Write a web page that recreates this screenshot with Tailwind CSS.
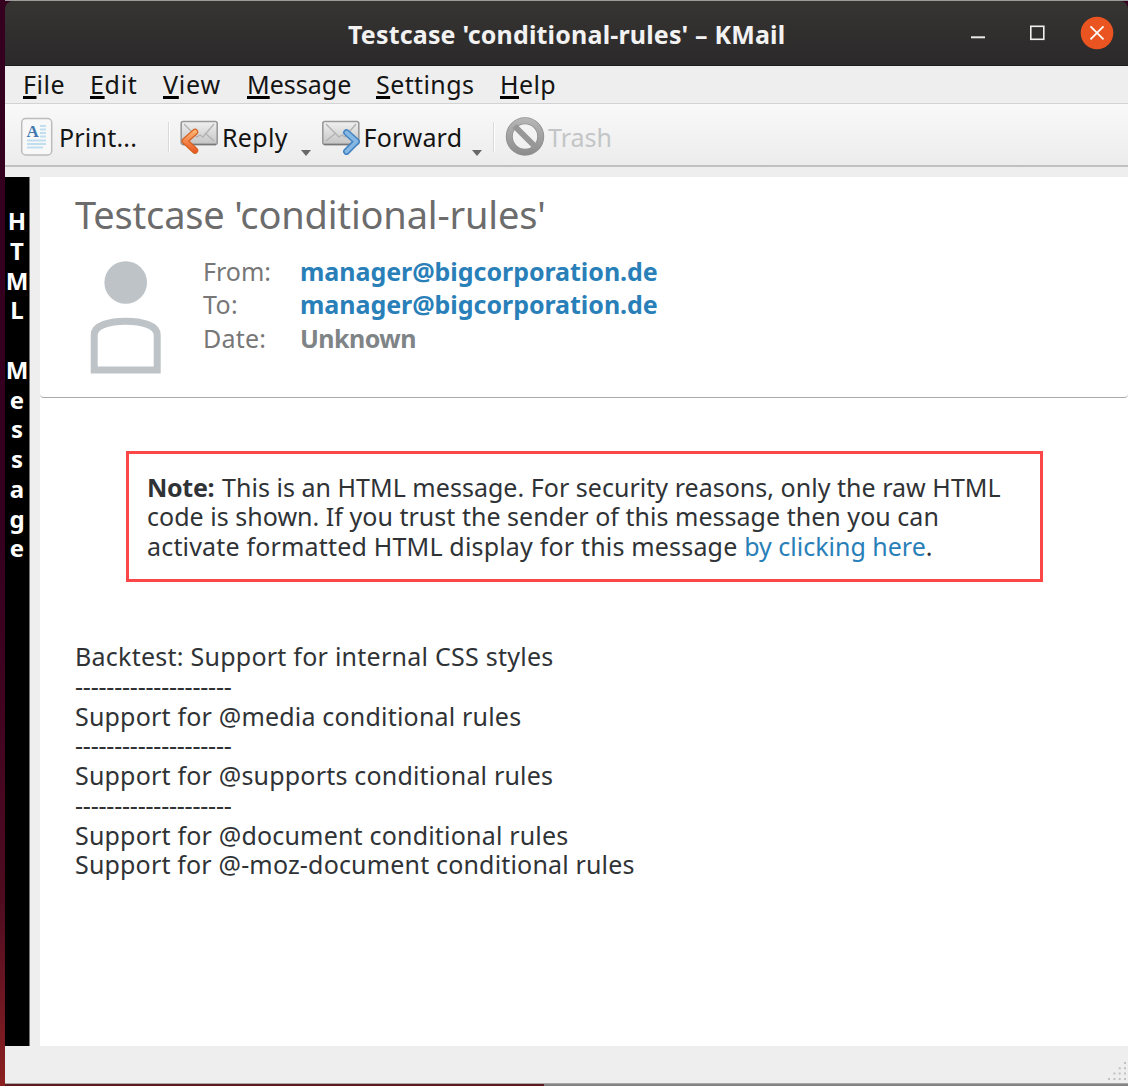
<!DOCTYPE html>
<html lang="en">
<head>
<meta charset="utf-8">
<title>Testcase 'conditional-rules' – KMail</title>
<script src="https://cdn.jsdelivr.net/npm/@tailwindcss/browser@4"></script>
</head>
<body class="w-[1128px] h-[1086px] overflow-hidden font-['Noto_Sans',sans-serif] text-[25px] whitespace-nowrap">
<div class="w-full h-full flex flex-col pl-[5px] bg-linear-to-b from-[#35001f] from-50% via-[#4f0c20] via-83% to-[#8b2020]">
  <div class="h-px shrink-0 bg-[#9a9d9b]"></div>
  <header class="h-[65px] shrink-0 flex items-center rounded-tl-lg rounded-tr-lg bg-linear-to-b from-[#363532] to-[#2b292a] border-b border-[#1c1c1c]">
    <h1 class="ml-[343px] pt-[1px] font-bold text-[#f2f2f2] leading-[30px] tracking-[0.17px]">Testcase 'conditional-rules' – KMail</h1>
    <svg class="ml-auto mr-[14px]" width="144" height="36" viewBox="0 0 144 36" fill="none">
      <path d="M1 22.300h14" stroke="#e8e8e8" stroke-width="2"/>
      <rect x="60.800" y="11.300" width="13" height="13" stroke="#f0f0f0" stroke-width="1.600"/>
      <circle cx="127" cy="18" r="16.300" fill="#e95420"/>
      <path d="M120.500 11.300l13 13M133.500 11.300l-13 13" stroke="#fff" stroke-width="1.800"/>
    </svg>
  </header>
  <nav class="h-[38px] shrink-0 flex items-start pt-[2px] pl-[18px] bg-[#eee] border-b border-[#d3d3d3] text-[#141414] leading-[32px] [&_u]:decoration-[3px] [&_u]:underline-offset-[2px] [&_u]:decoration-black">
    <div class="w-[67px] tracking-[0.5px]"><u>F</u>ile</div>
    <div class="w-[73px] tracking-[0.7px]"><u>E</u>dit</div>
    <div class="w-[84px] tracking-[0.8px]"><u>V</u>iew</div>
    <div class="w-[129px]"><u>M</u>essage</div>
    <div class="w-[124px] tracking-[0.4px]"><u>S</u>ettings</div>
    <div class="tracking-[0.4px]"><u>H</u>elp</div>
  </nav>
  <div class="h-[63px] shrink-0 flex items-center pt-[4px] pl-[15px] bg-linear-to-b from-[#f9f9f9] to-[#ececec] border-b-2 border-[#c0c0c0] text-[#141414] leading-[32px]">
    <svg class="w-[33px] shrink-0" height="40" viewBox="0 0 33 40">
      <rect x="1.700" y="1.500" width="30" height="36.500" rx="4" fill="#f8f8f8" stroke="#bcbcbc" stroke-width="1.500"/>
      <path d="M20 9h6M20 12.500h6M20 16h6M20 19.500h6M7 23.500h19M7 27h19M7 30.500h16" stroke="#c0def0" stroke-width="2"/>
      <text x="6.500" y="20" font-family="Liberation Serif, serif" font-size="17" font-weight="bold" fill="#4079b0">A</text>
    </svg>
    <span class="w-[115px] pl-[6px] tracking-[0.2px]">Print...</span>
    <i class="w-[2px] h-[30px] bg-[#dadada] border-r border-white"></i>
    <svg class="ml-[10px] shrink-0" width="40" height="36" viewBox="0 0 40 36">
      <defs>
        <linearGradient id="env" x2="0" y2="1"><stop stop-color="#f0f0f0"/><stop offset="1" stop-color="#c4c4c4"/></linearGradient>
        <linearGradient id="org" gradientUnits="userSpaceOnUse" x1="0" y1="10" x2="0" y2="34"><stop stop-color="#ffbb7c"/><stop offset="1" stop-color="#ea5420"/></linearGradient>
      </defs>
      <rect x="1.200" y="2.500" width="36" height="23" rx="2" fill="url(#env)" stroke="#999" stroke-width="1.600"/>
      <path d="M3 25.500h33" stroke="#777" stroke-width="1.500"/>
      <path d="M4 5l13 13 3-2 3 2L34 5M34 22l-9-8" fill="none" stroke="#b3b3b3" stroke-width="1.400"/>
      <path d="M15 13L4.800 22 15 31.500" fill="none" stroke="#d4611f" stroke-width="6.500" stroke-linejoin="round" stroke-linecap="round"/>
      <path d="M15 13L4.800 22 15 31.500" fill="none" stroke="url(#org)" stroke-width="4.300" stroke-linejoin="round" stroke-linecap="round"/>
    </svg>
    <span class="w-[81px] pl-[2px] tracking-[0.3px]">Reply</span>
    <svg class="mt-[33px] shrink-0" width="10" height="6" viewBox="0 0 10 6"><path d="M0 0h10L5 6z" fill="#686868"/></svg>
    <svg class="ml-[10px] shrink-0" width="40" height="36" viewBox="0 0 40 36">
      <rect x="1.800" y="2.500" width="36" height="23" rx="2" fill="url(#env)" stroke="#999" stroke-width="1.600"/>
      <path d="M3 25.500h33" stroke="#777" stroke-width="1.500"/>
      <path d="M5 5l13 13 3-2 3 2L35 5M5 22l10-8" fill="none" stroke="#b3b3b3" stroke-width="1.400"/>
      <path d="M25.500 13.500L35.500 22.500 25.500 32.500" fill="none" stroke="#4484c2" stroke-width="6.800" stroke-linejoin="round" stroke-linecap="round"/>
      <path d="M25.500 13.500L35.500 22.500 25.500 32.500" fill="none" stroke="#86b8e4" stroke-width="3.800" stroke-linejoin="round" stroke-linecap="round"/>
    </svg>
    <span class="w-[111px] pl-[2.500px] tracking-[0.2px]">Forward</span>
    <svg class="mt-[33px] shrink-0" width="10" height="6" viewBox="0 0 10 6"><path d="M0 0h10L5 6z" fill="#686868"/></svg>
    <i class="ml-[11px] w-[2px] h-[30px] bg-[#dadada] border-r border-white"></i>
    <svg class="ml-[10px] shrink-0" width="40" height="40" viewBox="0 0 40 40" fill="none">
      <defs><linearGradient id="tr" gradientUnits="userSpaceOnUse" x1="0" y1="0" x2="0" y2="40"><stop stop-color="#b8b8b8"/><stop offset="1" stop-color="#8a8a8a"/></linearGradient></defs>
      <circle cx="20" cy="19.500" r="15.700" stroke="#8f8f8f" stroke-width="7"/>
      <circle cx="20" cy="19.500" r="15.700" stroke="url(#tr)" stroke-width="5.500"/>
      <path d="M9.500 9l21 21" stroke="#979797" stroke-width="6"/>
    </svg>
    <span class="pl-[3px] text-[#c3c5c7]">Trash</span>
  </div>
  <div class="h-[10px] shrink-0 bg-[#eee]"></div>
  <div class="h-[869px] shrink-0 flex bg-[#eee]">
    <aside class="w-[25px] pt-[29px] bg-black border-r border-[#777] text-white font-bold text-[24px] leading-[29.75px] flex flex-col items-center">
      <span>H</span><span>T</span><span>M</span><span>L</span><span>&nbsp;</span><span>M</span><span>e</span><span>s</span><span>s</span><span>a</span><span>g</span><span>e</span>
    </aside>
    <main class="ml-[10px] grow bg-white text-[#303336]">
      <section class="h-[221px] rounded-b-[4px] border-b border-[#aaa] pl-[35px] pt-[7px] text-[#777]">
        <h2 class="text-[38px] leading-[60px] tracking-[-0.18px] text-[#6c6c6c]">Testcase 'conditional-rules'</h2>
        <div class="flex pt-[10.500px]">
          <svg class="ml-[15px] mt-[5.500px] shrink-0" width="72" height="115" viewBox="0 0 72 115">
            <circle cx="35.700" cy="22.500" r="21.300" fill="#bdc3c7"/>
            <path d="M4.200 110V75C4.200 65 20 61.200 35.700 61.200S67.200 65 67.200 75V110Z" fill="none" stroke="#bdc3c7" stroke-width="7"/>
          </svg>
          <dl class="ml-[41px] pt-[0.500px] grid grid-cols-[97px_auto] auto-rows-[33.300px] leading-[33.300px]">
            <dt>From:</dt><dd class="font-bold text-[#2980b9] tracking-[-0.04px]">manager@bigcorporation.de</dd>
            <dt class="tracking-[0.3px]">To:</dt><dd class="font-bold text-[#2980b9] tracking-[-0.04px]">manager@bigcorporation.de</dd>
            <dt class="tracking-[0.2px]">Date:</dt><dd class="font-bold text-[#7f8487] tracking-[-0.55px]">Unknown</dd>
          </dl>
        </div>
      </section>
      <section class="ml-[86px] mt-[53px] w-[917px] h-[131px] border-[3px] border-[#fb4747] pt-[18.500px] pl-[18px] leading-[29.750px]">
        <p><b class="inline-block w-[75px] tracking-[-0.3px]">Note:</b><span class="tracking-[0.030px]">This is an HTML message. For security reasons, only the raw HTML</span></p>
        <p class="tracking-[0.03px]">code is shown. If you trust the sender of this message then you can</p>
        <p><span class="tracking-[0.180px]">activate formatted HTML display for this message </span><a class="text-[#2980b9]">by clicking here</a>.</p>
      </section>
      <section class="ml-[35px] mt-[60px] leading-[29.750px] tracking-[0.190px]">
        <p class="tracking-[0.250px]">Backtest: Support for internal CSS styles</p>
        <p class="tracking-[-0.22px]">--------------------</p>
        <p>Support for @media conditional rules</p>
        <p class="tracking-[-0.22px]">--------------------</p>
        <p>Support for @supports conditional rules</p>
        <p class="tracking-[-0.22px]">--------------------</p>
        <p>Support for @document conditional rules</p>
        <p class="tracking-[0.17px]">Support for @-moz-document conditional rules</p>
      </section>
    </main>
  </div>
  <footer class="h-[38px] shrink-0 bg-[#eee] border-b border-[#a8a8a8] flex justify-end items-end">
    <svg width="22" height="21" viewBox="0 0 22 21" fill="#c2c2c2">
      <path d="M18 0h2v2h-2zM12.700 5.300h2v2h-2zM18 5.300h2v2h-2zM7.400 10.600h2v2h-2zM12.700 10.600h2v2h-2zM18 10.600h2v2h-2zM2 15.900h2v2h-2zM7.400 15.900h2v2h-2zM12.700 15.900h2v2h-2zM18 15.900h2v2h-2z"/>
    </svg>
  </footer>
  <div class="h-[2px] shrink-0 flex"><div class="w-[539px] bg-[#5c1a1c]"></div><div class="grow bg-[#858384]"></div></div>
</div>
</body>
</html>
